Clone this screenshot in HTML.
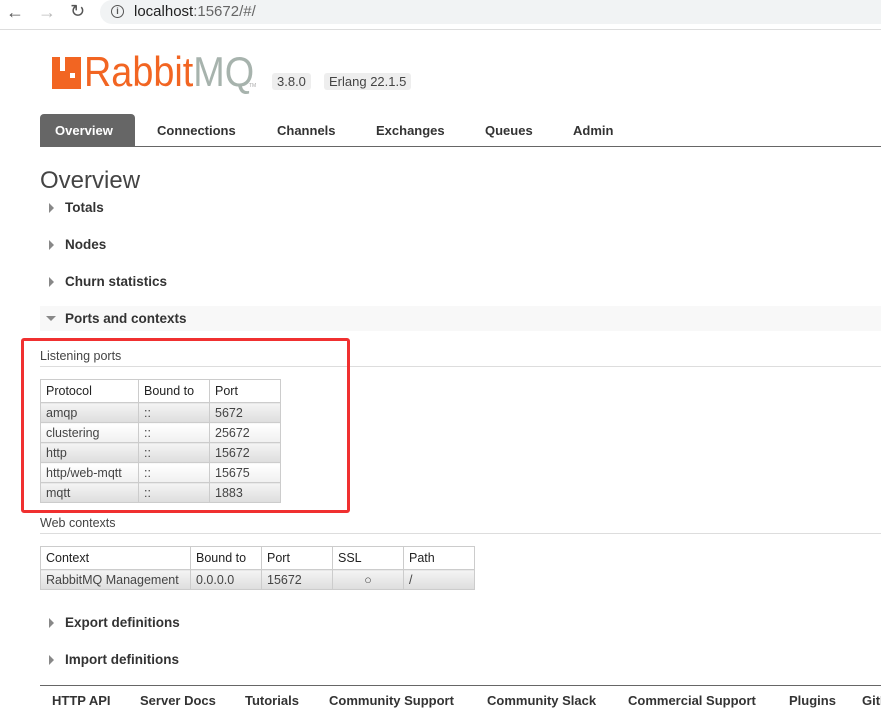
<!DOCTYPE html><html><head><style>
body{margin:0;width:881px;height:716px;overflow:hidden;background:#fff;font-family:"Liberation Sans","DejaVu Sans",sans-serif;position:relative}
.a{position:absolute}
.b{font-weight:bold;font-size:13px;color:#333;white-space:nowrap}
table{border-collapse:collapse;position:absolute;font-size:12.5px;color:#444}
td,th{border:1px solid #ccc;padding:0 5px;text-align:left;font-weight:normal;white-space:nowrap}
th{background:#fff;height:22px;color:#222}
td{height:19px;background:linear-gradient(#f4f4f4,#ddd)}
tr.o td{background:linear-gradient(#fff,#f0f0f0)}
.tri{display:inline-block;width:0;height:0;border-left:5px solid #888;border-top:5px solid transparent;border-bottom:5px solid transparent;margin-right:11px;vertical-align:-1px}
.sec{left:49px;font-weight:bold;font-size:13.5px;color:#333}
</style></head><body>
<div class="a" style="left:0;top:0;width:881px;height:29px;background:#fff;border-bottom:1px solid #ddd"></div>
<div class="a" style="left:6px;top:2px;font-size:18px;color:#555">&#8592;</div>
<div class="a" style="left:38px;top:2px;font-size:18px;color:#bbb">&#8594;</div>
<div class="a" style="left:70px;top:1px;font-size:18px;color:#555">&#8635;</div>
<div class="a" style="left:100px;top:0;width:800px;height:24px;background:#f1f3f4;border-radius:12px"></div>
<div class="a" style="left:111px;top:5px;width:11px;height:11px;border:1.5px solid #555;border-radius:50%;font-size:9px;text-align:center;line-height:11px;color:#555;font-weight:bold">i</div>
<div class="a" style="left:134px;top:3px;font-size:15px;color:#222">localhost<span style="color:#666">:15672/#/</span></div>
<div class="a" style="left:52px;top:57px;width:29px;height:32px;background:#f26522"></div>
<div class="a" style="left:60px;top:57px;width:5px;height:14px;background:#fff"></div>
<div class="a" style="left:70px;top:73px;width:5px;height:5px;background:#fff"></div>
<div class="a" style="left:84px;top:48px;font-size:42px;color:#f26522;transform:scaleX(0.9);transform-origin:0 0;white-space:nowrap">Rabbit<span style="color:#a7b3ad">MQ</span></div>
<div class="a" style="left:249px;top:83px;font-size:5px;color:#aaa">TM</div>
<div class="a" style="left:272px;top:73px;background:#eee;border-radius:3px;padding:1px 5px;font-size:13px;color:#444">3.8.0</div>
<div class="a" style="left:324px;top:73px;background:#eee;border-radius:3px;padding:1px 5px;font-size:13px;color:#444">Erlang 22.1.5</div>
<div class="a" style="left:40px;top:146px;width:841px;height:1px;background:#666"></div>
<div class="a" style="left:40px;top:114px;width:95px;height:32px;background:#666;border-radius:4px 4px 0 0"></div>
<div class="a b" style="left:55px;top:123px;color:#fff">Overview</div>
<div class="a b" style="left:157px;top:123px">Connections</div>
<div class="a b" style="left:277px;top:123px">Channels</div>
<div class="a b" style="left:376px;top:123px">Exchanges</div>
<div class="a b" style="left:485px;top:123px">Queues</div>
<div class="a b" style="left:573px;top:123px">Admin</div>
<div class="a" style="left:40px;top:167px;font-size:24px;color:#444">Overview</div>
<div class="a sec" style="top:200px"><span class="tri"></span>Totals</div>
<div class="a sec" style="top:237px"><span class="tri"></span>Nodes</div>
<div class="a sec" style="top:274px"><span class="tri"></span>Churn statistics</div>
<div class="a" style="left:40px;top:306px;width:841px;height:25px;background:#f8f8f8"></div>
<div class="a sec" style="top:311px;left:46px"><span style="display:inline-block;border-top:5px solid #888;border-left:5px solid transparent;border-right:5px solid transparent;margin-right:9px;vertical-align:2px"></span>Ports and contexts</div>
<div class="a" style="left:40px;top:349px;font-size:12.5px;color:#444">Listening ports</div>
<div class="a" style="left:40px;top:366px;width:841px;height:1px;background:#ddd"></div>
<table style="left:40px;top:379px"><tr><th style="width:87px">Protocol</th><th style="width:60px">Bound to</th><th style="width:60px">Port</th></tr>
<tr><td>amqp</td><td>::</td><td>5672</td></tr><tr class="o"><td>clustering</td><td>::</td><td>25672</td></tr><tr><td>http</td><td>::</td><td>15672</td></tr><tr class="o"><td>http/web-mqtt</td><td>::</td><td>15675</td></tr><tr><td>mqtt</td><td>::</td><td>1883</td></tr></table>
<div class="a" style="left:21px;top:338px;width:323px;height:169px;border:3px solid #f03030;border-radius:3px"></div>
<div class="a" style="left:40px;top:516px;font-size:12.5px;color:#444">Web contexts</div>
<div class="a" style="left:40px;top:533px;width:841px;height:1px;background:#ddd"></div>
<table style="left:40px;top:546px"><tr><th style="width:139px">Context</th><th style="width:60px">Bound to</th><th style="width:60px">Port</th><th style="width:60px">SSL</th><th style="width:60px">Path</th></tr>
<tr><td>RabbitMQ Management</td><td>0.0.0.0</td><td>15672</td><td style="text-align:center">&#9675;</td><td>/</td></tr></table>
<div class="a sec" style="top:615px"><span class="tri"></span>Export definitions</div>
<div class="a sec" style="top:652px"><span class="tri"></span>Import definitions</div>
<div class="a" style="left:40px;top:685px;width:841px;height:1px;background:#666"></div>
<div class="a b" style="left:52px;top:693px">HTTP API</div>
<div class="a b" style="left:140px;top:693px">Server Docs</div>
<div class="a b" style="left:245px;top:693px">Tutorials</div>
<div class="a b" style="left:329px;top:693px">Community Support</div>
<div class="a b" style="left:487px;top:693px">Community Slack</div>
<div class="a b" style="left:628px;top:693px">Commercial Support</div>
<div class="a b" style="left:789px;top:693px">Plugins</div>
<div class="a b" style="left:862px;top:693px">GitHub</div>
</body></html>
